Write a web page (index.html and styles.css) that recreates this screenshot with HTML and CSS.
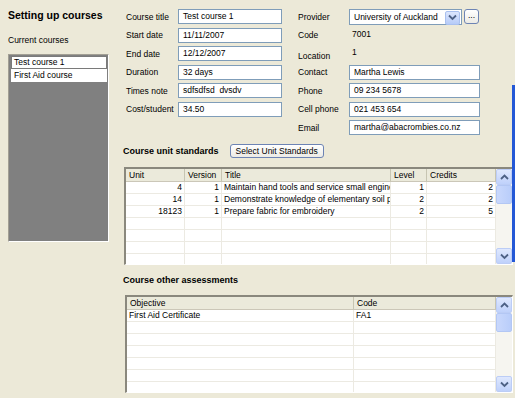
FILE: index.html
```html
<!DOCTYPE html>
<html>
<head>
<title>Setting up courses</title>
<link rel="stylesheet" href="styles.css">
</head>
<body>
<div class="blue-edge"></div>
<div class="page">

<div class="side">
<h1 class="title">Setting up courses</h1>
<div class="side-label">Current courses</div>
<div class="course-list">
<div class="course-item current">Test course 1</div>
<div class="course-item">First Aid course</div>
</div>
</div>

<div class="main">
<div class="details">
<div class="fields course-fields">
<span class="label">Course title</span><div class="input">Test course 1</div>
<span class="label">Start date</span><div class="input">11/11/2007</div>
<span class="label">End date</span><div class="input">12/12/2007</div>
<span class="label">Duration</span><div class="input">32 days</div>
<span class="label">Times note</span><div class="input">sdfsdfsd&nbsp; dvsdv</div>
<span class="label">Cost/student</span><div class="input">34.50</div>
</div>

<div class="fields provider-fields">
<span class="label">Provider</span>
<div class="provider-pick">
<div class="select">University of Auckland<span class="drop"><svg width="9" height="7" viewBox="0 0 9 7"><path d="M1 1.5 L4.5 5 L8 1.5" fill="none" stroke="#4d6185" stroke-width="1.8"/></svg></span></div>
<div class="more">...</div>
</div>
<span class="label">Code</span><span class="value">7001</span>
<span class="label low">Location</span><span class="value">1</span>
<span class="label">Contact</span><div class="input">Martha Lewis</div>
<span class="label">Phone</span><div class="input">09 234 5678</div>
<span class="label">Cell phone</span><div class="input">021 453 654</div>
<span class="label">Email</span><div class="input">martha@abacrombies.co.nz</div>
</div>
</div>

<div class="section-head">
<h2 class="section-title">Course unit standards</h2>
<div class="button">Select Unit Standards</div>
</div>

<div class="grid grid-units">
<div class="grid-body">
<table>
<colgroup><col style="width:59px"><col style="width:37px"><col style="width:169px"><col style="width:36px"><col style="width:69px"></colgroup>
<tr><th>Unit</th><th>Version</th><th>Title</th><th>Level</th><th>Credits</th></tr>
<tr><td class="num">4</td><td class="num">1</td><td>Maintain hand tools and service small engines</td><td class="num">1</td><td class="num">2</td></tr>
<tr><td class="num">14</td><td class="num">1</td><td>Demonstrate knowledge of elementary soil properties</td><td class="num">2</td><td class="num">2</td></tr>
<tr><td class="num">18123</td><td class="num">1</td><td>Prepare fabric for embroidery</td><td class="num">2</td><td class="num">5</td></tr>
<tr><td></td><td></td><td></td><td></td><td></td></tr>
<tr><td></td><td></td><td></td><td></td><td></td></tr>
<tr><td></td><td></td><td></td><td></td><td></td></tr>
<tr><td></td><td></td><td></td><td></td><td></td></tr>
</table>
</div>
<div class="vscroll">
<div class="arrow"><svg width="9" height="7" viewBox="0 0 9 7"><path d="M1 5 L4.5 1.5 L8 5" fill="none" stroke="#4d6185" stroke-width="1.8"/></svg></div>
<div class="thumb"></div>
<div class="track"></div>
<div class="arrow"><svg width="9" height="7" viewBox="0 0 9 7"><path d="M1 1.5 L4.5 5 L8 1.5" fill="none" stroke="#4d6185" stroke-width="1.8"/></svg></div>
</div>
</div>

<h2 class="section-title other-title">Course other assessments</h2>

<div class="grid grid-other">
<div class="grid-body">
<table>
<colgroup><col style="width:227px"><col style="width:142px"></colgroup>
<tr><th>Objective</th><th>Code</th></tr>
<tr><td>First Aid Certificate</td><td>FA1</td></tr>
<tr><td></td><td></td></tr>
<tr><td></td><td></td></tr>
<tr><td></td><td></td></tr>
<tr><td></td><td></td></tr>
<tr><td></td><td></td></tr>
<tr><td></td><td></td></tr>
</table>
</div>
<div class="vscroll">
<div class="arrow"><svg width="9" height="7" viewBox="0 0 9 7"><path d="M1 5 L4.5 1.5 L8 5" fill="none" stroke="#4d6185" stroke-width="1.8"/></svg></div>
<div class="thumb"></div>
<div class="track"></div>
<div class="arrow"><svg width="9" height="7" viewBox="0 0 9 7"><path d="M1 1.5 L4.5 5 L8 1.5" fill="none" stroke="#4d6185" stroke-width="1.8"/></svg></div>
</div>
</div>
</div>

</div>
</body>
</html>
```

FILE: styles.css
```css
/* Course setup form, XP look */

body
{ margin: 0;
background-color: #ece9d8;
font-family: "Liberation Sans", Arial, sans-serif;
font-size: 8.5px;
color: #000;
}

.page
{ display: flex;
width: 515px;
height: 398px;
overflow: hidden;
}

.blue-edge
{ position: absolute;
left: 512px; top: 85px;
width: 3px; height: 177px;
background-color: #2458d6;
}

/* Left side: course list */

.side
{ width: 115px;
padding-left: 8px;
}

h1.title
{ margin: 9px 0 0 0;
font-size: 10.5px;
line-height: 12px;
font-weight: bold;
}

.side-label
{ margin-top: 14px;
line-height: 10px;
}

.course-list
{ margin-top: 9px;
width: 97px;
height: 184px;
padding: 1px;
background-color: #808080;
border: 1px solid;
border-color: #a29f94 #fff #fff #a29f94;
}

.course-item
{ height: 11px;
line-height: 11px;
padding-left: 2px;
margin-left: 1px;
background-color: #fff;
border: 1px solid #fff;
}

.course-item.current
{ border-color: #7a7a7a;
}

/* Right side: details */

.main
{ width: 390px;
}

.details
{ display: flex;
gap: 16px;
padding-top: 9px;
padding-left: 3px;
}

.fields
{ display: grid;
grid-auto-rows: 15px;
row-gap: 3.5px;
align-items: center;
}

.course-fields
{ grid-template-columns: 52px 104px;
}

.provider-fields
{ grid-template-columns: 51px 131px;
}

.label.low
{ position: relative;
top: 2px;
}

.value
{ padding-left: 3px;
align-self: start;
padding-top: 1px;
}

.input
{ box-sizing: border-box;
height: 15px;
line-height: 13px;
padding-left: 4px;
background-color: #fff;
border: 1px solid #7f9db9;
white-space: nowrap;
overflow: hidden;
}

.provider-pick
{ display: flex;
gap: 2px;
}

.select
{ box-sizing: border-box;
display: flex;
justify-content: space-between;
width: 113px;
height: 16px;
line-height: 14px;
padding-left: 4px;
padding-right: 1px;
background-color: #fff;
border: 1px solid #7f9db9;
}

.drop
{ display: flex;
align-items: center;
justify-content: center;
width: 13px;
height: 12px;
margin-top: 1px;
border-radius: 2px;
background: linear-gradient(#dce6fd, #b6cbf8);
border: 1px solid #a9c0ef;
}

.more
{ box-sizing: border-box;
width: 15px;
height: 15px;
line-height: 11px;
text-align: center;
border: 1px solid #6d84b4;
border-radius: 3px;
background: linear-gradient(#fff, #ecebe5);
}

/* Section heads */

.section-head
{ display: flex;
align-items: center;
gap: 11px;
margin-top: 9px;
height: 14px;
}

h2.section-title
{ margin: 0;
font-size: 9px;
line-height: 14px;
font-weight: bold;
}

h2.other-title
{ margin-top: 8px;
}

.button
{ box-sizing: border-box;
height: 14px;
line-height: 12px;
padding: 0 5px;
border: 1px solid #6d84b4;
border-radius: 3px;
background: linear-gradient(#fff, #ecebe5);
}

/* Grids */

.grid
{ display: flex;
box-sizing: border-box;
height: 98px;
width: 389px;
margin-top: 9px;
margin-left: 1px;
background-color: #fff;
border-style: solid;
border-width: 2px 1px 1px 2px;
border-color: #8a887d #fff #fff #8a887d;
overflow: hidden;
}

.grid-other
{ margin-top: 8px;
margin-left: 2px;
width: 388px;
}

.grid-body
{ flex: 1;
overflow: hidden;
}

table
{ width: 100%;
table-layout: fixed;
border-collapse: separate;
border-spacing: 0;
font-size: 8.5px;
}

th
{ height: 12px;
padding: 0 3px;
text-align: left;
font-weight: normal;
line-height: 12px;
background-color: #ebeadb;
border-right: 1px solid #c7c5b2;
border-bottom: 1px solid #cbc7b8;
white-space: nowrap;
overflow: hidden;
}

td
{ height: 11px;
padding: 0 2px;
line-height: 11px;
border-right: 1px solid #eceae2;
border-bottom: 1px solid #eceae2;
white-space: nowrap;
overflow: hidden;
}

td.num
{ text-align: right;
}

.vscroll
{ display: flex;
flex-direction: column;
width: 16px;
background-color: #f6f5f0;
}

.vscroll .arrow
{ box-sizing: border-box;
display: flex;
align-items: center;
justify-content: center;
height: 16px;
border: 1px solid #bccdf6;
border-radius: 2px;
background: linear-gradient(#dfe8fe, #bfd1fb);
}

.vscroll .thumb
{ box-sizing: border-box;
height: 19px;
border: 1px solid #b3c7f4;
border-radius: 2px;
background: linear-gradient(90deg, #c9d8fc, #b9cdfa);
}

.vscroll .track
{ flex: 1;
}
```
